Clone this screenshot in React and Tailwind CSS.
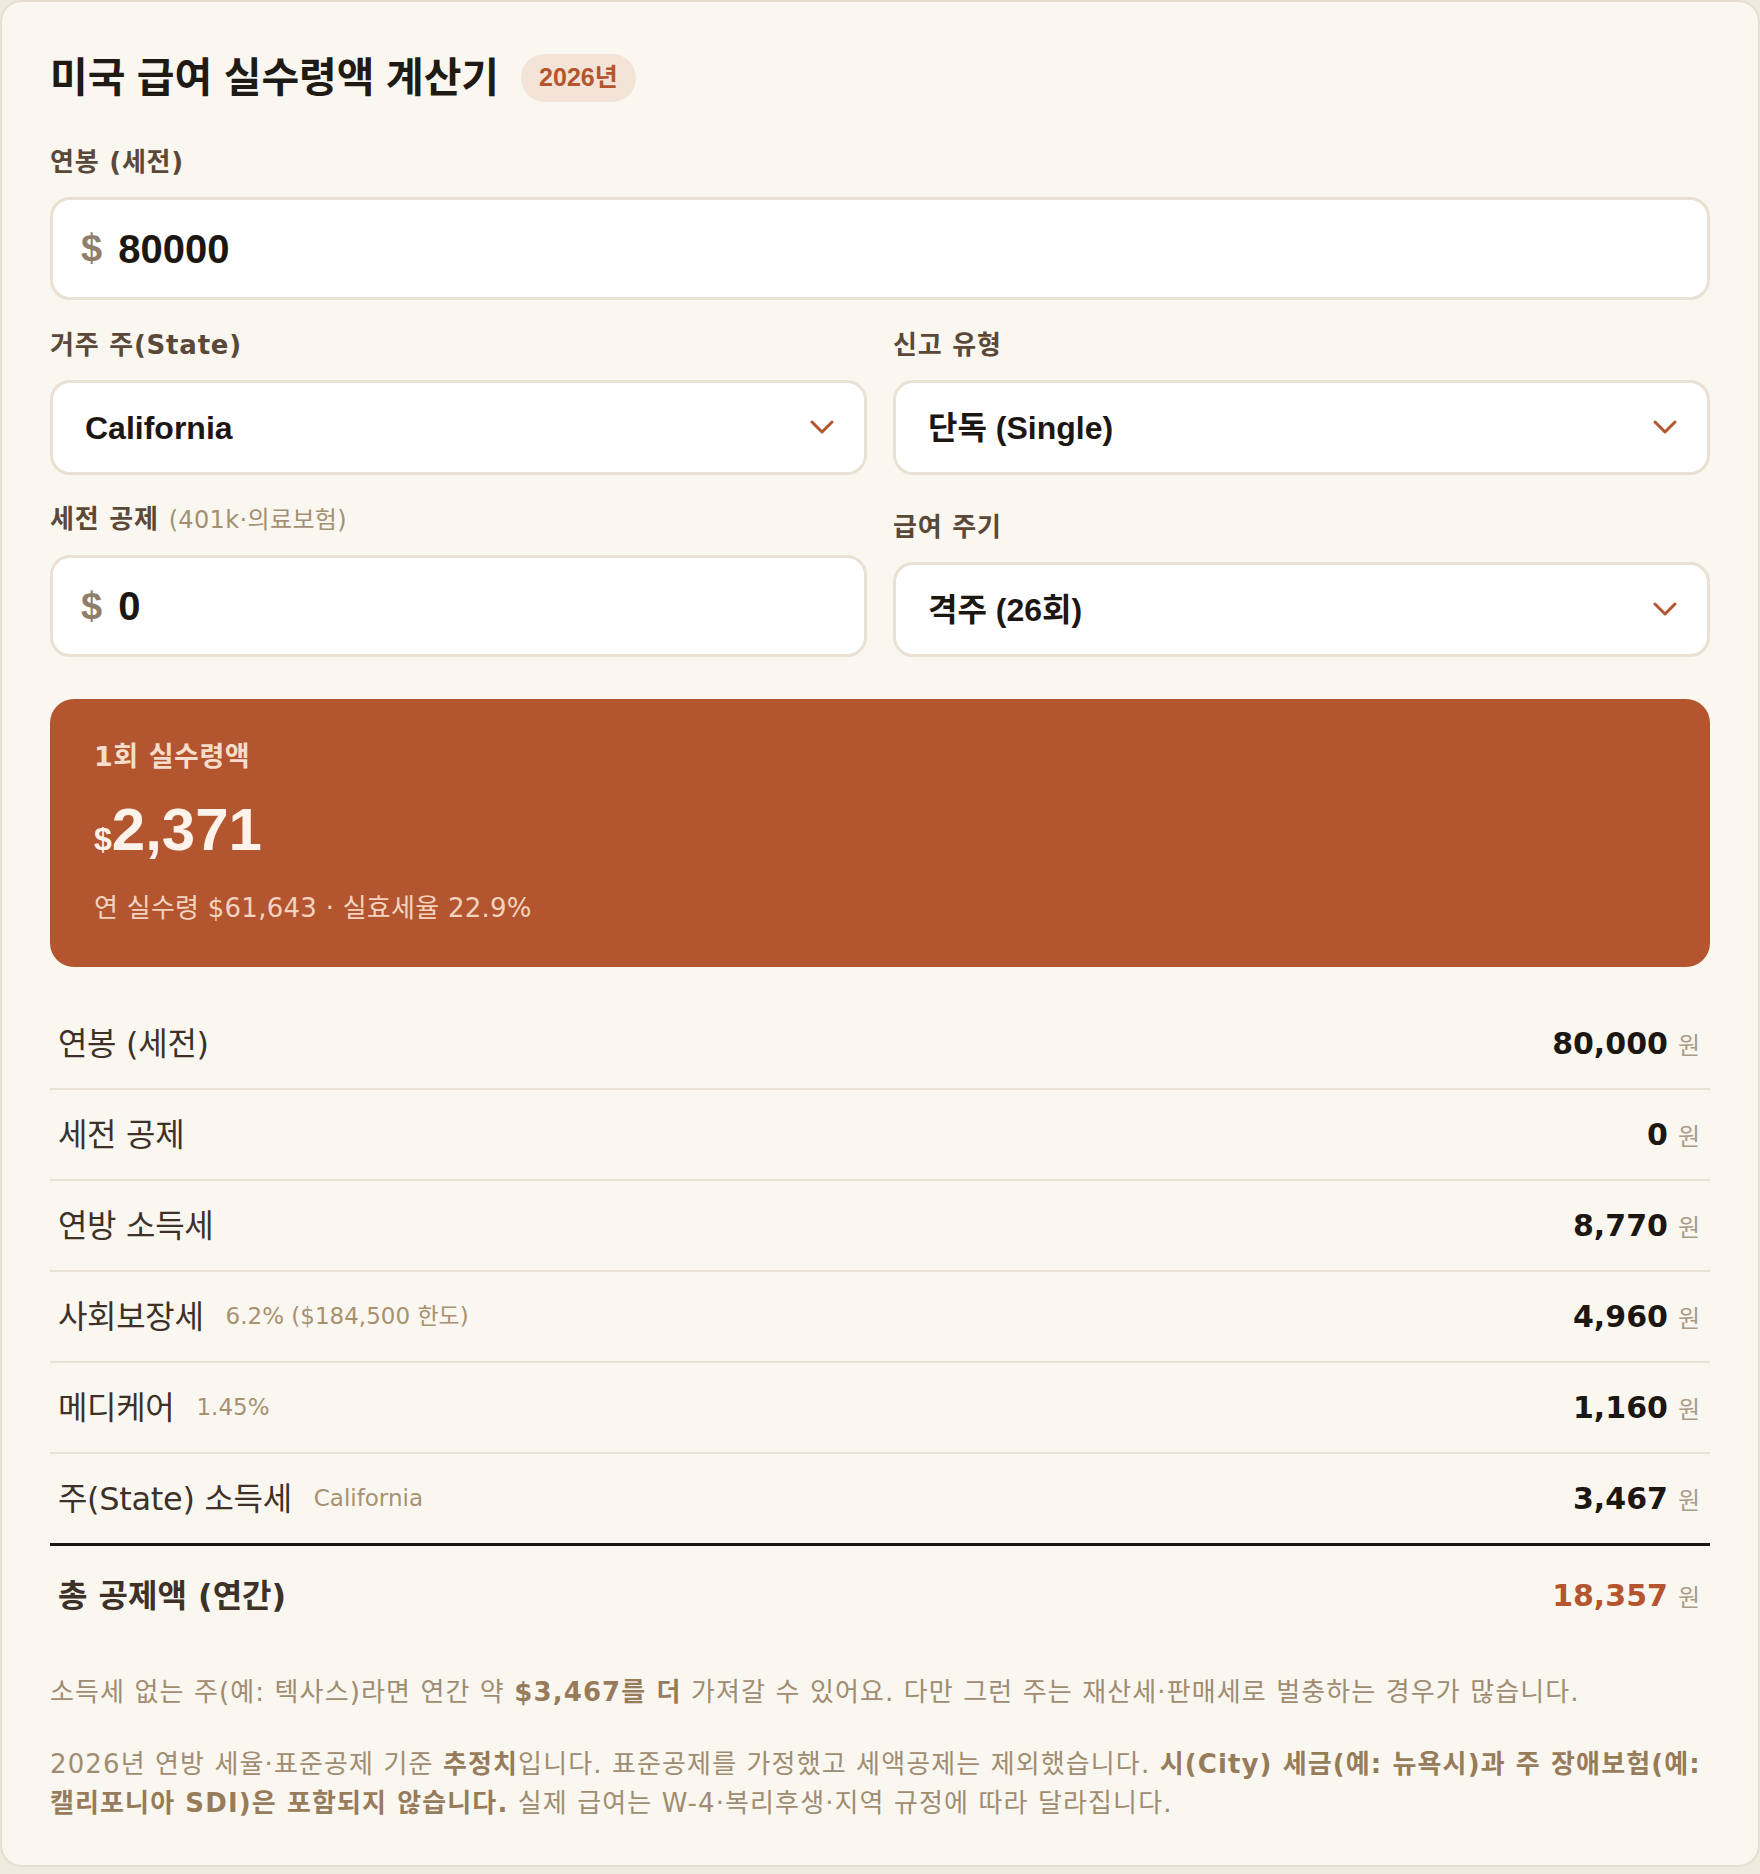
import React from "react";

const latin = "font-['Liberation_Sans','Noto_Sans_CJK_KR',sans-serif]";
const deja = "font-['DejaVu_Sans','Noto_Sans_CJK_KR',sans-serif]";

function Chevron() {
  return (
    <svg width="24" height="15" viewBox="0 0 24 15" fill="none">
      <polyline
        points="2,2 12,12 22,2"
        stroke="#b4552f"
        strokeWidth="3"
        strokeLinecap="round"
        strokeLinejoin="round"
      />
    </svg>
  );
}

function Label({ children, sub }) {
  return (
    <div className={`${deja} mb-[17px] text-[26px] font-bold leading-[36px] tracking-[0.03em] text-[#5a4838]`}>
      {children}
      {sub && (
        <span className="ml-2.5 text-[24px] font-normal tracking-[0.015em] text-[#a39072]">{sub}</span>
      )}
    </div>
  );
}

function MoneyInput({ value, tall }) {
  return (
    <div
      className={`${latin} flex items-center rounded-[20px] border-[3px] border-[#e8e1d4] bg-white px-[28px] ${
        tall ? "h-[103px]" : "h-[102px]"
      }`}
    >
      <span className="text-[38px] font-bold text-[#8f7f6a]">$</span>
      <input
        readOnly
        value={value}
        className="ml-4 w-full bg-transparent text-[40px] font-bold text-[#1c1712] outline-none"
      />
    </div>
  );
}

function Select({ value }) {
  return (
    <div
      className={`${latin} flex h-[95px] items-center justify-between rounded-[20px] border-[3px] border-[#e8e1d4] bg-white pl-[32px] pr-[30px]`}
    >
      <span className="text-[32px] font-bold text-[#1c1712]">{value}</span>
      <Chevron />
    </div>
  );
}

const rows = [
  { label: "연봉 (세전)", value: "80,000" },
  { label: "세전 공제", value: "0" },
  { label: "연방 소득세", value: "8,770" },
  { label: "사회보장세", note: "6.2% ($184,500 한도)", value: "4,960" },
  { label: "메디케어", note: "1.45%", value: "1,160" },
  { label: "주(State) 소득세", note: "California", value: "3,467" },
];

export default function App() {
  return (
    <div className="min-h-screen bg-[#efe9de]">
      <div className="rounded-[22px] border-2 border-[#e6dfd1] bg-[#faf7f1] px-12 pb-[42px] pt-[52px]">
        {/* header */}
        <div className="flex items-center gap-[22px]">
          <h1 className={`${latin} text-[41px] font-bold leading-[48px] text-[#1f1a14]`}>
            미국 급여 실수령액 계산기
          </h1>
          <span
            className={`${latin} flex h-12 items-center rounded-full bg-[#f3e4d7] px-[18px] text-[25px] font-bold text-[#b5552f]`}
          >
            2026년
          </span>
        </div>

        {/* salary */}
        <div className="mt-[42px]">
          <Label>연봉 (세전)</Label>
          <MoneyInput value="80000" tall />
        </div>

        <div className="mt-[27px] grid grid-cols-2 items-end gap-x-[26px] gap-y-[26px]">
          <div>
            <Label>거주 주(State)</Label>
            <Select value="California" />
          </div>
          <div>
            <Label>신고 유형</Label>
            <Select value="단독 (Single)" />
          </div>
          <div>
            <Label sub="(401k·의료보험)">세전 공제</Label>
            <MoneyInput value="0" />
          </div>
          <div>
            <Label>급여 주기</Label>
            <Select value="격주 (26회)" />
          </div>
        </div>

        {/* result */}
        <div className="mt-[42px] rounded-[24px] bg-[#b3562f] px-11 py-10">
          <div className={`${deja} text-[27px] font-bold leading-[36px] tracking-[0.02em] text-[#f6dccb]`}>
            1회 실수령액
          </div>
          <div className={`${latin} mt-[25px] flex items-baseline font-bold leading-none text-[#fdf3ea]`}>
            <span className="text-[32px]">$</span>
            <span className="text-[60px]">2,371</span>
          </div>
          <div className={`${deja} mt-[29px] text-[26px] leading-[38px] tracking-[0.01em] text-[#f3d3bf]`}>
            연 실수령 $61,643 · 실효세율 22.9%
          </div>
        </div>

        {/* breakdown */}
        <div className={`${deja} mt-[32px]`}>
          {rows.map((r, i) => (
            <div
              key={r.label}
              className={`flex items-center justify-between pl-2 pr-[10px] ${
                i === rows.length - 1
                  ? "h-[92px] border-b-[3px] border-[#1c1712]"
                  : "h-[91px] border-b-2 border-[#e9e3d7]"
              }`}
            >
              <div className="flex items-center">
                <span className="text-[32px] tracking-[-0.01em] text-[#3d3128]">{r.label}</span>
                {r.note && (
                  <span className="ml-[22px] text-[23px] text-[#a8916f]">{r.note}</span>
                )}
              </div>
              <div className="flex items-baseline">
                <span className="text-[30px] font-bold text-[#1c1712]">{r.value}</span>
                <span className="ml-[10px] text-[24px] text-[#a99b88]">원</span>
              </div>
            </div>
          ))}
          <div className="flex h-[99px] items-center justify-between pl-2 pr-[10px]">
            <span className="text-[32px] font-bold text-[#3d3128]">총 공제액 (연간)</span>
            <div className="flex items-baseline">
              <span className="text-[30px] font-bold text-[#b5552f]">18,357</span>
              <span className="ml-[10px] text-[24px] text-[#a99b88]">원</span>
            </div>
          </div>
        </div>

        {/* notes */}
        <div className={`${deja} text-[26px] leading-[39px] tracking-[0.043em] text-[#a08c70]`}>
          <p className="mt-[28px]">
            소득세 없는 주(예: 텍사스)라면 연간 약{" "}
            <b className="font-bold text-[#977c5b]">$3,467를 더</b> 가져갈 수 있어요. 다만 그런
            주는 재산세·판매세로 벌충하는 경우가 많습니다.
          </p>
          <p className="mt-[33px]">
            2026년 연방 세율·표준공제 기준 <b className="font-bold text-[#977c5b]">추정치</b>
            입니다. 표준공제를 가정했고 세액공제는 제외했습니다.{" "}
            <b className="font-bold text-[#977c5b]">
              시(City) 세금(예: 뉴욕시)과 주 장애보험(예: 캘리포니아 SDI)은 포함되지 않습니다.
            </b>{" "}
            실제 급여는 W-4·복리후생·지역 규정에 따라 달라집니다.
          </p>
        </div>
      </div>
    </div>
  );
}
